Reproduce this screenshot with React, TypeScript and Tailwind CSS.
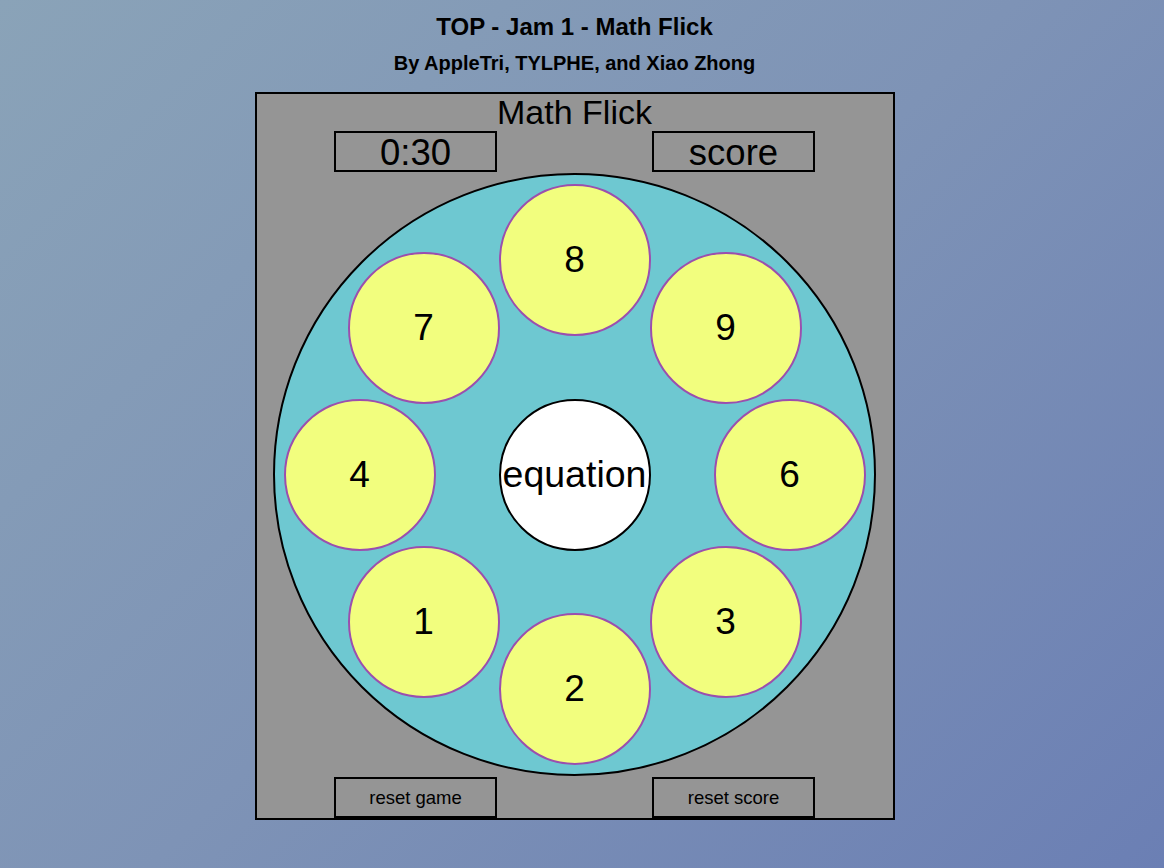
import React from 'react';

// number keys around the dial, offsets of each key's center from the dial center
const keys = [
  { n: 8, dx: 0, dy: -215 },
  { n: 9, dx: 151, dy: -147 },
  { n: 6, dx: 215, dy: 0 },
  { n: 3, dx: 151, dy: 147 },
  { n: 2, dx: 0, dy: 214 },
  { n: 1, dx: -151, dy: 147 },
  { n: 4, dx: -215, dy: 0 },
  { n: 7, dx: -151, dy: -147 },
];

const DIAL = 599; // inner size of the big circle
const KEY = 152;

const App = () => {
  return (
    <div
      className="min-h-[868px] w-full bg-[linear-gradient(135deg,#8aa3b8_0%,#7e93b6_50%,#6b7fb4_100%)] text-black"
      style={{ fontFamily: '"Liberation Sans", Arial, sans-serif' }}
    >
      <div className="flex flex-col items-center pt-[13px] pr-[15px]">
        <h1 className="text-[24px] leading-[28px] font-bold">TOP - Jam 1 - Math Flick</h1>
        <h2 className="mt-[10px] text-[20px] leading-[24px] font-bold">By AppleTri, TYLPHE, and Xiao Zhong</h2>

        <div className="mt-[17px] w-[640px] shrink-0 h-[728px] border-2 border-black bg-[#959595] flex flex-col">
          <div className="h-[37px] text-center text-[34px] leading-[37px]">Math Flick</div>

          <div className="flex justify-around">
            <div className="w-[163px] h-[41px] border-2 border-black flex items-center justify-center pt-[3px] text-[36.5px] leading-none">
              0:30
            </div>
            <div className="w-[163px] h-[41px] border-2 border-black flex items-center justify-center pt-[3px] text-[36.5px] leading-none">
              score
            </div>
          </div>

          <div className="relative mx-auto mt-[1px] w-[603px] h-[603px] rounded-full border-2 border-black bg-[#6ec8d1]">
            {keys.map((k) => (
              <div
                key={k.n}
                className="absolute w-[152px] h-[152px] rounded-full border-2 border-[#9b4fae] bg-[#f2fe7e] flex items-center justify-center text-[37px]"
                style={{ left: DIAL / 2 + k.dx - KEY / 2, top: DIAL / 2 + k.dy - KEY / 2 }}
              >
                {k.n}
              </div>
            ))}
            <div className="absolute left-[223.5px] top-[223.5px] w-[152px] h-[152px] rounded-full border-2 border-black bg-white flex items-center justify-center text-[37.5px]">
              equation
            </div>
          </div>

          <div className="flex justify-around mt-[1px]">
            <button className="w-[163px] h-[41px] border-2 border-black bg-[#959595] pt-[2px] text-[18.5px] leading-none">
              reset game
            </button>
            <button className="w-[163px] h-[41px] border-2 border-black bg-[#959595] pt-[2px] text-[18.5px] leading-none">
              reset score
            </button>
          </div>
        </div>
      </div>
    </div>
  );
};

export default App;
